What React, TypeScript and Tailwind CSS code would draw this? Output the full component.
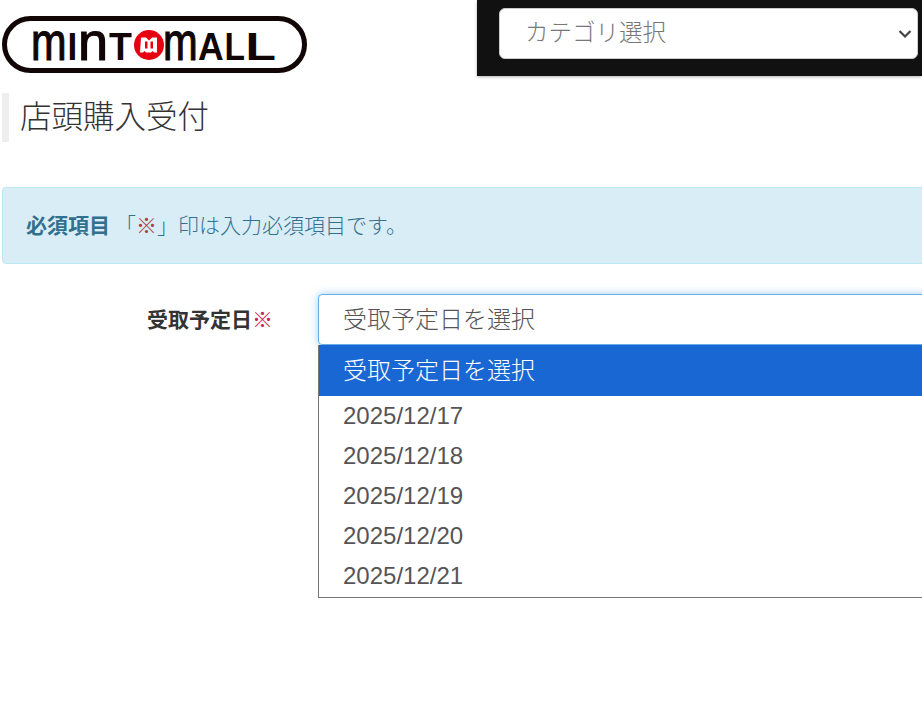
import React from 'react';

const fontStack = "font-['Liberation_Sans','Noto_Sans_CJK_JP',sans-serif]";

const dates = ['2025/12/17', '2025/12/18', '2025/12/19', '2025/12/20', '2025/12/21'];

// logo letters, placed one by one because the wordmark mixes arched and square shapes
// sx squeezes or stretches each letter to the width it has in the logo
const logoLetters = [
  { ch: 'm', x: 29, sx: 0.79, size: 54, stroke: 1.2, weight: 400 },
  { ch: 'I', x: 65.5, sx: 0.9, size: 39, stroke: 0, weight: 700 },
  { ch: 'n', x: 76, sx: 1, size: 54, stroke: 1.2, weight: 400 },
  { ch: 'T', x: 107, sx: 0.96, size: 39, stroke: 0, weight: 700 },
  { ch: 'm', x: 161, sx: 0.77, size: 54, stroke: 1.2, weight: 400 },
  { ch: 'A', x: 196, sx: 0.91, size: 39, stroke: 0, weight: 700 },
  { ch: 'L', x: 222.5, sx: 0.86, size: 39, stroke: 0, weight: 700 },
  { ch: 'L', x: 243.5, sx: 1.28, size: 39, stroke: 0, weight: 700 },
];

const Logo = () => {
  return (
    <svg width="305" height="73" viewBox="0 -16 305 73" className="block" role="img" aria-label="MINT MALL">
      <rect x="2.5" y="2.500" width="300" height="52" rx="26" fill="#fff" stroke="#120505" strokeWidth="5" />
      {logoLetters.map((l, i) => (
        <text
          key={i}
          transform={`translate(${l.x} 44) scale(${l.sx} 1)`}
          fontFamily="Liberation Sans"
          fontWeight={l.weight}
          fontSize={l.size}
          fill="#120505"
          stroke="#120505"
          strokeWidth={l.stroke}
        >
          {l.ch}
        </text>
      ))}
      <circle cx="147" cy="29" r="15" fill="#e60012" />
      <path d="M139 21.500h5l3 3 3-3h5v15h-3l-1.500-1.500-1.500 1.500h-5l-1.500-1.500-1.500 1.500h-3z" fill="#fff" />
      <path d="M143 25.500h2.500v7h-2.500zM148.500 25.500h2.500v7h-2.500z" fill="#e60012" />
    </svg>
  );
};

const App = () => {
  return (
    <div className={`h-[712px] w-[922px] overflow-hidden bg-white ${fontStack}`}>
      {/* Header */}
      <div className="flex h-[76px]">
        <div className="w-[477px] pl-[2px]">
          <Logo />
        </div>
        <div className="flex-1 bg-[#111111] pl-[22px] pt-[8px] pr-[4px] shadow-[0_1px_3px_rgba(0,0,0,0.3)]">
          <div className="flex h-[51px] items-center justify-between rounded-[6px] border border-[#cccccc] bg-white pl-[25px] pr-[5px] text-[23.5px] font-light text-[#777777]">
            <span>カテゴリ選択</span>
            <svg width="14" height="10" viewBox="0 0 14 10" fill="none" stroke="#444444" strokeWidth="2.200">
              <path d="M1.500 2l5.500 5.500L12.500 2" />
            </svg>
          </div>
        </div>
      </div>

      {/* Title */}
      <h1 className="ml-[2px] mt-[17px] flex h-[49px] items-center border-l-[7px] border-[#eeeeee] pl-[11px] text-[31.5px] font-light text-[#333333]">
        店頭購入受付
      </h1>

      {/* Notice */}
      <div className="ml-[2px] mt-[45px] flex h-[77px] w-[1000px] items-center rounded-[4px] border border-[#bce8f1] bg-[#d9edf7] pl-[23px] text-[21px] text-[#31708f]">
        <strong className="font-bold">必須項目</strong>
        <span className="ml-[5px] font-light">
          「<span className="text-[#a94442]">※</span>」印は入力必須項目です。
        </span>
      </div>

      {/* Form row */}
      <div className="mt-[30px] flex items-start">
        <label className="flex h-[51px] w-[273px] shrink-0 items-center justify-end text-[21px] font-bold text-[#333333]">
          受取予定日<span className="font-light text-[#c7254e]">※</span>
        </label>
        <div className="relative ml-[45px] w-[800px] shrink-0">
          <div className="flex h-[51px] items-center rounded-[4px] border border-[#66afe9] bg-white pl-[24px] text-[24px] font-light text-[#555555] shadow-[0_0_8px_rgba(102,175,233,0.6)]">
            受取予定日を選択
          </div>
          {/* Open list */}
          <div className="absolute left-0 right-0 top-[51px] h-[253px] border border-t-0 border-[#767676] bg-white text-[24px] text-[#555555]">
            <div className="flex h-[51px] items-center bg-[#1967d2] pl-[24px] font-light text-white">受取予定日を選択</div>
            {dates.map((date) => (
              <div key={date} className="flex h-[40px] items-center pl-[24px]">
                {date}
              </div>
            ))}
          </div>
        </div>
      </div>
    </div>
  );
};

export default App;
